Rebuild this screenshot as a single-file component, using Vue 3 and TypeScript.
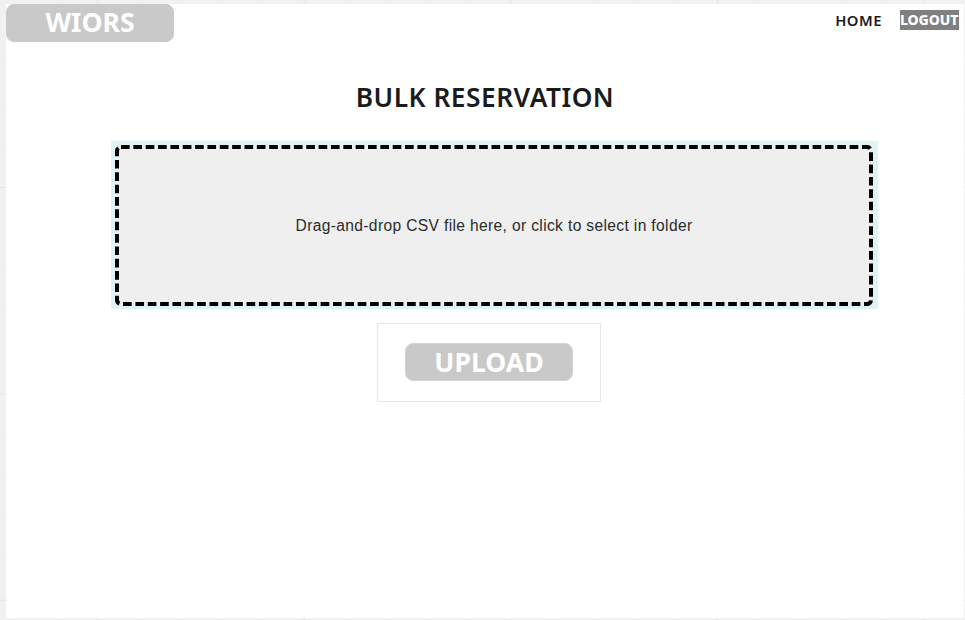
<script setup lang="ts">
import { ref } from 'vue'

const fileInput = ref<HTMLInputElement | null>(null)

function chooseFile(): void {
  fileInput.value?.click()
}
</script>

<template>
  <div class="canvas">
    <main class="page">
      <header class="topbar">
        <a class="pill">WIORS</a>
        <nav class="nav">
          <a class="home">HOME</a>
          <a class="logout">LOGOUT</a>
        </nav>
      </header>
      <h1 class="title">BULK RESERVATION</h1>
      <section class="drop-wrap">
        <button class="drop" type="button" @click="chooseFile">
          <svg class="outline" width="758" height="161" viewBox="0 0 758 161" aria-hidden="true">
            <rect x="2" y="2" width="754" height="157" rx="4" />
          </svg>
          <span class="hint">Drag-and-drop CSV file here, or click to select in folder</span>
        </button>
        <input ref="fileInput" class="file" type="file" accept=".csv" />
      </section>
      <div class="upload-box">
        <button class="pill upload" type="button">UPLOAD</button>
      </div>
    </main>
  </div>
</template>

<style>
body {
  margin: 0;
  overflow: hidden;
}
</style>

<style scoped>
.canvas {
  box-sizing: border-box;
  width: 965px;
  height: 620px;
  padding: 4px 1px 2px 6px;
  background-color: #f1f1f1;
  background-image:
    linear-gradient(90deg, #e7e7e7 1px, transparent 1px),
    linear-gradient(#e5e5e5 1px, transparent 1px),
    linear-gradient(90deg, #eeeeee 1px, transparent 1px),
    linear-gradient(#eeeeee 1px, transparent 1px);
  background-size: 206.7px 100%, 100% 206.4px, 41.34px 100%, 100% 41.28px;
  background-position: 97px 0, 0 187px, 14.5px 0, 0 21.5px;
  font-family: "Noto Sans", sans-serif;
}
.page {
  height: 614px;
  background: #fff;
}
.topbar {
  display: flex;
  justify-content: space-between;
  height: 38px;
}
.pill {
  box-sizing: border-box;
  width: 168px;
  height: 38px;
  padding: 0;
  border: 1px solid #c9c9c9;
  border-radius: 8px;
  background: #c9c9c9;
  color: #fff;
  font: 700 26.6px/35px "Noto Sans", sans-serif;
  text-align: center;
}
.upload {
  border-color: #d2d2d2;
}
.nav {
  display: flex;
  align-items: flex-start;
  gap: 18px;
  padding: 6px 5px 0 0;
  font-size: 14px;
  line-height: 20px;
}
.home {
  color: #1b1b1b;
  font-size: 14.8px;
  font-weight: 600;
  line-height: 21px;
  letter-spacing: 0.5px;
}
.logout {
  width: 59px;
  background: #808080;
  color: #fff;
  font-weight: 800;
  letter-spacing: -0.1px;
  white-space: nowrap;
}
.title {
  margin: 37px 0 0;
  color: #1b1b1b;
  font-size: 26.3px;
  font-weight: 600;
  line-height: 36px;
  letter-spacing: 0.5px;
  text-align: center;
}
.drop-wrap {
  box-sizing: border-box;
  width: 767px;
  height: 168px;
  margin: 26px 0 0 105px;
  padding: 4px 5px 3px 4px;
  background: #dff2f6;
}
.drop {
  display: grid;
  place-items: center;
  width: 758px;
  height: 161px;
  padding: 0;
  border: 0;
  border-radius: 6px;
  background: #efefef;
  color: #2b2b2b;
  font: 15.6px/20px "Liberation Sans", Arial, sans-serif;
  letter-spacing: 0.35px;
}
.outline,
.hint {
  grid-area: 1 / 1;
}
.outline rect {
  fill: none;
  stroke: #000;
  stroke-width: 4;
  stroke-dasharray: 8.65 3.7;
}
.file {
  display: none;
}
.upload-box {
  box-sizing: border-box;
  width: 224px;
  height: 79px;
  margin: 14px 0 0 371px;
  padding: 19px 27px;
  border: 1px solid #e7e7e7;
}
</style>
